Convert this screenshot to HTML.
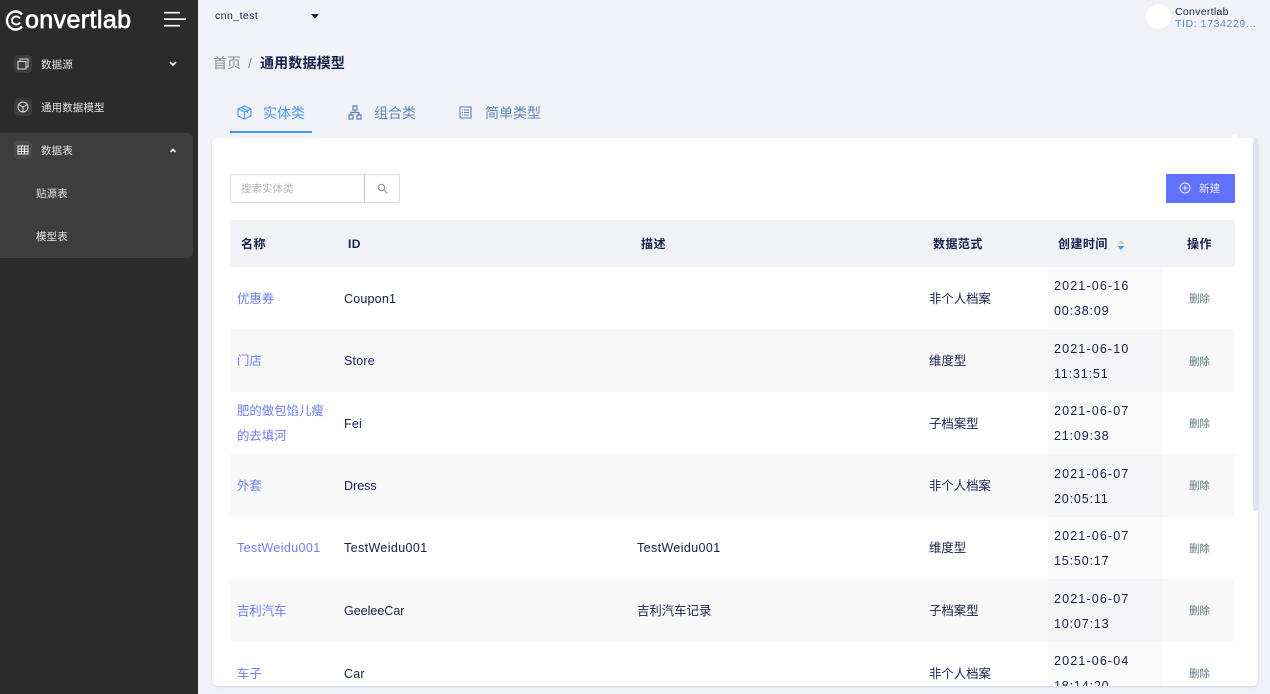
<!DOCTYPE html>
<html lang="zh"><head><meta charset="utf-8"><style>
html,body{margin:0;padding:0}
body{width:1270px;height:694px;overflow:hidden;position:relative;background:#f0f2f7;font-family:"Liberation Sans","Noto Sans CJK SC",sans-serif;color:#14204a}
.a{position:absolute;white-space:nowrap}
.t{position:absolute;white-space:nowrap;font-size:12.5px;line-height:25px;letter-spacing:.2px;color:#14204a;margin-top:1px}
.c{font-size:12.4px;letter-spacing:0}
.dt{letter-spacing:1.15px}
.dt span{letter-spacing:.85px}
.l{color:#6d7bf5}
.d{color:#5f7a80;font-size:10.5px;left:1189px;letter-spacing:0}
.h{font-weight:bold;font-size:12px;top:232px;line-height:24px;color:#14204a;margin-top:0;letter-spacing:.45px}
.s{color:#e6e6e6;font-size:10.5px;line-height:16px;letter-spacing:.1px}
.ib{position:absolute;left:14px;width:18px;height:18px;background:#3c3c3c;border-radius:4px}
</style></head><body>
<div class="a" style="left:0;top:0;width:198px;height:694px;background:#2b2b2b"></div>
<div class="a" style="left:0;top:133px;width:193px;height:125px;background:#3d3d3d;border-radius:0 5px 5px 0"></div>
<div class="a" style="left:25px;top:1px;font-size:25px;line-height:38px;color:#fff;letter-spacing:.4px;-webkit-text-stroke:.7px #fff">onvertlab</div>
<svg class="a" style="left:5px;top:10px" width="19" height="21" viewBox="0 0 19 21" fill="none" stroke="#fff" stroke-width="2.400"><path d="M17 4.500A8.600 9 0 1 0 17 16.500"/><path d="M15 8.500A4.300 4 0 1 0 15 12.500" stroke-width="2"/></svg>
<svg class="a" style="left:164px;top:11px" width="22" height="16" stroke="#fff" stroke-width="1.700"><path d="M0 1.700H16M0 8.200H22M0 14.700H16"/></svg>
<div class="ib" style="top:55px"></div>
<svg class="a" style="left:17px;top:58px" width="12" height="12" fill="none" stroke="#ddd" stroke-width="1"><path d="M1 3.500H9V11H1ZM3 3.500V1H11V9H9"/></svg>
<div class="a s" style="left:41px;top:57px">数据源</div>
<svg class="a" style="left:169px;top:61px" width="8" height="6" fill="none" stroke="#fff" stroke-width="1.600"><path d="M1 1L4 4L7 1"/></svg>
<div class="ib" style="top:98px"></div>
<svg class="a" style="left:17px;top:101px" width="12" height="12" fill="none" stroke="#ddd" stroke-width="1"><circle cx="6" cy="6" r="5"/><path d="M1.500 3.500L6 6L10.500 3.500M6 6V11"/></svg>
<div class="a s" style="left:41px;top:100px">通用数据模型</div>
<div class="ib" style="top:141px;background:#4a4a4a"></div>
<svg class="a" style="left:17px;top:145px" width="12" height="10" fill="none" stroke="#eee" stroke-width="1"><path d="M1 1H11V9H1ZM1 4H11M1 6.500H11M4.500 1V9M7.500 1V9"/></svg>
<div class="a s" style="left:41px;top:143px">数据表</div>
<svg class="a" style="left:170px;top:148px" width="6" height="5" fill="none" stroke="#fff" stroke-width="1.600"><path d="M.5 4L3 1.500L5.500 4"/></svg>
<div class="a s" style="left:36px;top:186px">贴源表</div>
<div class="a s" style="left:36px;top:229px">模型表</div>

<div class="a" style="left:215px;top:8px;font-size:10.5px;line-height:16px;letter-spacing:.45px">cnn_test</div>
<svg class="a" style="left:311px;top:14px" width="8" height="5"><path d="M0 0H8L4 4.500Z" fill="#14204a"/></svg>
<div class="a" style="left:1146px;top:4px;width:25px;height:25px;border-radius:50%;background:#fff"></div>
<div class="a" style="left:1175px;top:6px;font-size:10.5px;line-height:12px;letter-spacing:.3px">Convertlab</div>
<div class="a" style="left:1175px;top:18px;font-size:10.5px;line-height:12px;letter-spacing:.6px;color:#5b8ac4">TID: 1734229...</div>

<div class="a" style="left:213px;top:53px;font-size:14px;line-height:20px;color:#8a8a8a">首页</div>
<div class="a" style="left:248px;top:53px;font-size:14px;line-height:20px;color:#8a8a8a">/</div>
<div class="a" style="left:260px;top:53px;font-size:14px;line-height:20px;font-weight:bold;color:#14204a;letter-spacing:.15px">通用数据模型</div>

<svg class="a" style="left:237px;top:105px" width="15" height="15" fill="none" stroke="#4a9af5" stroke-width="1.100"><path d="M7.500 1L14 4V11L7.500 14L1 11V4ZM1 4L7.500 7L14 4M7.500 7V14M4 2.500L10.500 5.500V8"/></svg>
<div class="a" style="left:263px;top:103px;font-size:14px;line-height:20px;color:#4a9af5">实体类</div>
<div class="a" style="left:230px;top:131px;width:82px;height:2px;background:#3f95f7"></div>
<svg class="a" style="left:348px;top:105px" width="14" height="15" fill="none" stroke="#5a80b5" stroke-width="1.200"><path d="M5 1H9V5H5ZM1 10H5V14H1ZM9 10H13V14H9ZM3 10V7.500H11V10M7 5V7.500"/></svg>
<div class="a" style="left:374px;top:103px;font-size:14px;line-height:20px;color:#5f86ba">组合类</div>
<svg class="a" style="left:459px;top:106px" width="13" height="13" fill="none" stroke="#5a80b5" stroke-width="1.100"><path d="M1 1H12V12H1ZM5 4H10M5 6.500H10M5 9H10M3 4H4M3 6.500H4M3 9H4"/></svg>
<div class="a" style="left:485px;top:103px;font-size:14px;line-height:20px;color:#5f86ba">简单类型</div>

<div class="a" style="left:212px;top:138px;width:1046px;height:548px;background:#fff;border-radius:6px;box-shadow:0 1px 2px rgba(180,190,215,.5);overflow:hidden"></div>
<div class="a" style="left:1232px;top:134px;width:5px;height:5px;background:#fff"></div>
<div class="a" style="left:1253px;top:138px;width:5px;height:373px;background:#dfe3ec;border-radius:3px"></div>

<div class="a" style="left:230px;top:174px;width:170px;height:29px;box-sizing:border-box;border:1px solid #d5dee8;border-radius:2px;background:#fff"></div>
<div class="a" style="left:364px;top:174px;width:1px;height:29px;background:#b9cde0"></div>
<div class="a" style="left:241px;top:181px;font-size:10.5px;line-height:16px;color:#b5b5b5">搜索实体类</div>
<svg class="a" style="left:377px;top:183px" width="11" height="11" fill="none" stroke="#8a8a8a" stroke-width="1"><circle cx="4.500" cy="4.500" r="3.200"/><path d="M7 7L10.500 10.500"/></svg>

<div class="a" style="left:1166px;top:174px;width:69px;height:29px;background:#6271fb;border-radius:1px"></div>
<svg class="a" style="left:1179px;top:182px" width="12" height="12" fill="none" stroke="#eef" stroke-width="1"><circle cx="6" cy="6" r="5"/><path d="M6 3.500V8.500M3.500 6H8.500"/></svg>
<div class="a" style="left:1199px;top:181px;font-size:10.5px;line-height:16px;color:#e6e8ff;letter-spacing:.3px">新建</div>

<div class="a" style="left:230px;top:220px;width:1005px;height:47px;background:#f0f2f6;border-radius:3px 3px 0 0"></div>
<div class="a" style="left:230px;top:329px;width:1005px;height:63px;background:#f8f8f9"></div>
<div class="a" style="left:230px;top:454px;width:1005px;height:63px;background:#f8f8f9"></div>
<div class="a" style="left:230px;top:579px;width:1005px;height:62px;background:#f8f8f9"></div>
<div class="a" style="left:1048px;top:267px;width:115px;height:419px;background:rgba(240,240,243,.3)"></div>

<div class="t h" style="left:241px">名称</div>
<div class="t h" style="left:348px">ID</div>
<div class="t h" style="left:641px">描述</div>
<div class="t h" style="left:933px">数据范式</div>
<div class="t h" style="left:1058px">创建时间</div>
<div class="t h" style="left:1187px">操作</div>
<svg class="a" style="left:1117px;top:240px" width="8" height="10"><path d="M4 0L7.500 4H.5Z" fill="#ccc"/><path d="M4 10L7.500 6H.5Z" fill="#4a9af5"/></svg>

<div class="t l c" style="left:237px;top:286px">优惠券</div>
<div class="t" style="left:344px;top:286px">Coupon1</div>
<div class="t c" style="left:929px;top:286px">非个人档案</div>
<div class="t dt" style="left:1054px;top:273px">2021-06-16<br><span>00:38:09</span></div>
<div class="t d" style="top:286px">删除</div>

<div class="t l c" style="left:237px;top:348px">门店</div>
<div class="t" style="left:344px;top:348px">Store</div>
<div class="t c" style="left:929px;top:348px">维度型</div>
<div class="t dt" style="left:1054px;top:336px">2021-06-10<br><span>11:31:51</span></div>
<div class="t d" style="top:349px">删除</div>

<div class="t l c" style="left:237px;top:398px">肥的做包馅儿瘦<br>的去填河</div>
<div class="t" style="left:344px;top:411px">Fei</div>
<div class="t c" style="left:929px;top:411px">子档案型</div>
<div class="t dt" style="left:1054px;top:398px">2021-06-07<br><span>21:09:38</span></div>
<div class="t d" style="top:411px">删除</div>

<div class="t l c" style="left:237px;top:473px">外套</div>
<div class="t" style="left:344px;top:473px;letter-spacing:0">Dress</div>
<div class="t c" style="left:929px;top:473px">非个人档案</div>
<div class="t dt" style="left:1054px;top:461px">2021-06-07<br><span>20:05:11</span></div>
<div class="t d" style="top:473px">删除</div>

<div class="t l" style="left:237px;top:535px;letter-spacing:.38px">TestWeidu001</div>
<div class="t" style="left:344px;top:535px;letter-spacing:.38px">TestWeidu001</div>
<div class="t" style="left:637px;top:535px;letter-spacing:.38px">TestWeidu001</div>
<div class="t c" style="left:929px;top:535px">维度型</div>
<div class="t dt" style="left:1054px;top:523px">2021-06-07<br><span>15:50:17</span></div>
<div class="t d" style="top:536px">删除</div>

<div class="t l c" style="left:237px;top:598px">吉利汽车</div>
<div class="t" style="left:344px;top:598px;letter-spacing:0">GeeleeCar</div>
<div class="t c" style="left:637px;top:598px">吉利汽车记录</div>
<div class="t c" style="left:929px;top:598px">子档案型</div>
<div class="t dt" style="left:1054px;top:586px">2021-06-07<br><span>10:07:13</span></div>
<div class="t d" style="top:598px">删除</div>

<div class="a" style="left:230px;top:641px;width:1023px;height:45px;overflow:hidden">
<div class="t l c" style="left:7px;top:20px">车子</div>
<div class="t" style="left:114px;top:20px">Car</div>
<div class="t c" style="left:699px;top:20px">非个人档案</div>
<div class="t dt" style="left:824px;top:7px">2021-06-04<br><span>18:14:20</span></div>
<div class="t d" style="left:959px;top:20px">删除</div>
</div>
</body></html>
